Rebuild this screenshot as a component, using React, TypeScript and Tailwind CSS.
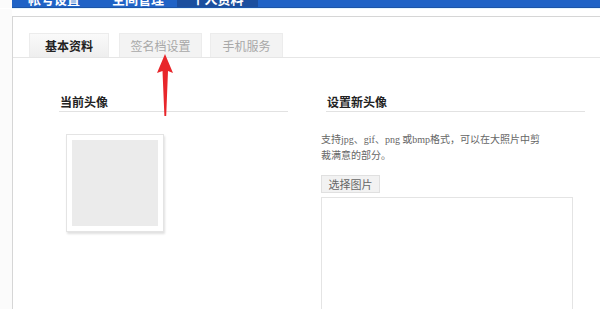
import React from "react";

export default function App() {
  return (
    <div
      className="relative w-[600px] h-[309px] overflow-hidden bg-white text-[12px]"
      style={{ fontFamily: '"Noto Sans CJK SC", "Noto Sans", sans-serif' }}
    >
      {/* top nav bar */}
      <div className="flex pl-[12px] bg-[#fbfbfb]">
        <div className="flex-1 h-[8px] bg-[#1f63c6] flex overflow-hidden text-white text-[13px] font-bold leading-[14px] border-b border-[#1c55a8]">
          <div className="w-[165px] flex">
            <span className="ml-[16px] -mt-[8px]">帐号设置</span>
            <span className="ml-[32px] -mt-[8px]">空间管理</span>
          </div>
          <div className="w-[81px] bg-[#1b4f9e] flex justify-center">
            <span className="-mt-[8px]">个人资料</span>
          </div>
        </div>
      </div>
      <div className="h-[1px] ml-[12px] bg-[#e3f6ff]" />
      <div className="flex h-[300px]">
        <div className="w-[12px] bg-[#fbfbfb]" />
        <div className="flex-1 mt-[7px] border-t border-l border-[#d6d6d6] relative">
          {/* tabs */}
          <div className="flex pt-[16px] pl-[16px] border-b border-[#e6e6e6] h-[41px]">
            <div className="w-[80px] h-[24px] flex items-center justify-center font-bold text-[#222] bg-gradient-to-b from-[#fafafa] to-[#eeeeee] border-t border-l border-r border-[#ececec] -mb-px">
              基本资料
            </div>
            <div className="ml-[10px] w-[83px] h-[24px] flex items-center justify-center text-[#a8a8a8] bg-[#f3f3f3] border-t border-l border-r border-[#ececec]">
              签名档设置
            </div>
            <div className="ml-[8px] w-[73px] h-[24px] flex items-center justify-center text-[#a8a8a8] bg-[#f3f3f3] border-t border-l border-r border-[#ececec]">
              手机服务
            </div>
          </div>
          {/* content */}
          <div className="flex pt-[37px]">
            <div className="ml-[46px] w-[229px]">
              <div className="pl-[1px] h-[17px] font-bold text-[#222] leading-[14px] border-b border-[#e2e2e2]">当前头像</div>
              <div className="mt-[22px] ml-[7px] w-[98px] h-[98px] bg-white border border-[#e4e4e4] shadow-[1px_2px_2px_rgba(0,0,0,0.12)] p-[5px]">
                <div className="w-full h-full bg-[#ebebeb]" />
              </div>
            </div>
            <div className="ml-[33px] w-[264px]">
              <div className="ml-[5px] pl-[1px] h-[17px] font-bold text-[#222] leading-[14px] border-b border-[#e2e2e2]">设置新头像</div>
              <div
                className="mt-[19px] text-[10px] leading-[15px] text-[#666] w-[250px]"
                style={{ fontFamily: '"Noto Sans CJK SC", serif' }}
              >
                <div>
                  支持<span style={{ fontFamily: '"Liberation Serif", serif' }}>jpg</span>、<span style={{ fontFamily: '"Liberation Serif", serif' }}>gif</span>、<span style={{ fontFamily: '"Liberation Serif", serif' }}>png</span> 或<span style={{ fontFamily: '"Liberation Serif", serif' }}>bmp</span>格式，可以在大照片中剪
                </div>
                <div>裁满意的部分。</div>
              </div>
              <div className="mt-[13px] w-[59px] h-[18px] flex items-center justify-center bg-[#f2f2f2] border border-[#e0e0e0] text-[#666] text-[11px]">
                选择图片
              </div>
              <div className="mt-[4px] w-[252px] h-[130px] border border-[#e4e4e4]" />
            </div>
          </div>
        </div>
      </div>
      {/* red arrow */}
      <svg className="absolute left-[154px] top-[52px]" width="22" height="66" viewBox="0 0 22 66">
        <path d="M11 2 L19 21 L14 19 L12.2 64 L10.4 64 L8.5 19 L3 21 Z" fill="#e8262b" />
      </svg>
    </div>
  );
}
